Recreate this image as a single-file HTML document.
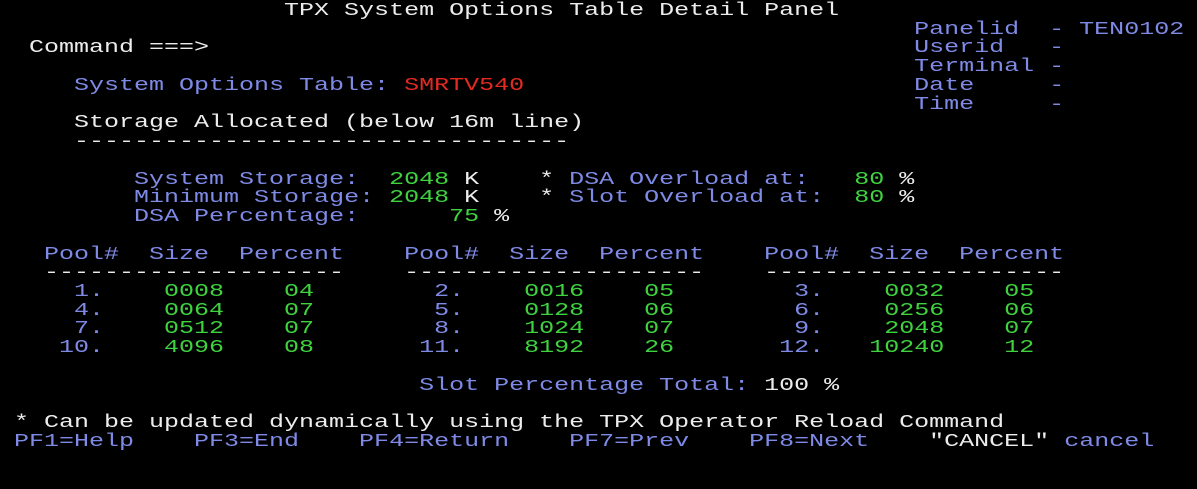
<!DOCTYPE html>
<html><head><meta charset="utf-8"><style>
html,body{margin:0;padding:0;background:#000;width:1197px;height:489px;overflow:hidden}
pre{position:absolute;left:14px;top:2px;margin:0;font-family:"Liberation Mono",monospace;font-size:18px;line-height:18.73px;color:#ececec;transform:scaleX(1.3889);transform-origin:0 0;white-space:pre}
.b{color:#7f8ae6}.g{color:#3fd23f}.r{color:#e42a20}
</style></head><body>
<pre>                  TPX System Options Table Detail Panel
<span class="b">                                                            Panelid  - TEN0102</span>
 Command ===>                                               <span class="b">Userid   -</span>
<span class="b">                                                            Terminal -</span>
<span class="b">    System Options Table: </span><span class="r">SMRTV540</span><span class="b">                          Date     -</span>
<span class="b">                                                            Time     -</span>
    Storage Allocated (below 16m line)
    ---------------------------------

        <span class="b">System Storage:  </span><span class="g">2048</span> K    * <span class="b">DSA Overload at:   </span><span class="g">80</span> %
        <span class="b">Minimum Storage: </span><span class="g">2048</span> K    * <span class="b">Slot Overload at:  </span><span class="g">80</span> %
        <span class="b">DSA Percentage:      </span><span class="g">75</span> %

<span class="b">  Pool#  Size  Percent    Pool#  Size  Percent    Pool#  Size  Percent</span>
  --------------------    --------------------    --------------------
<span class="b">    1.</span><span class="g">    0008    04</span><span class="b">        2.</span><span class="g">    0016    05</span><span class="b">        3.</span><span class="g">    0032    05</span>
<span class="b">    4.</span><span class="g">    0064    07</span><span class="b">        5.</span><span class="g">    0128    06</span><span class="b">        6.</span><span class="g">    0256    06</span>
<span class="b">    7.</span><span class="g">    0512    07</span><span class="b">        8.</span><span class="g">    1024    07</span><span class="b">        9.</span><span class="g">    2048    07</span>
<span class="b">   10.</span><span class="g">    4096    08</span><span class="b">       11.</span><span class="g">    8192    26</span><span class="b">       12.</span><span class="g">   10240    12</span>

<span class="b">                           Slot Percentage Total: </span>100 %

* Can be updated dynamically using the TPX Operator Reload Command
<span class="b">PF1=Help    PF3=End    PF4=Return    PF7=Prev    PF8=Next</span>    "CANCEL" <span class="b">cancel</span>
</pre>
</body></html>
